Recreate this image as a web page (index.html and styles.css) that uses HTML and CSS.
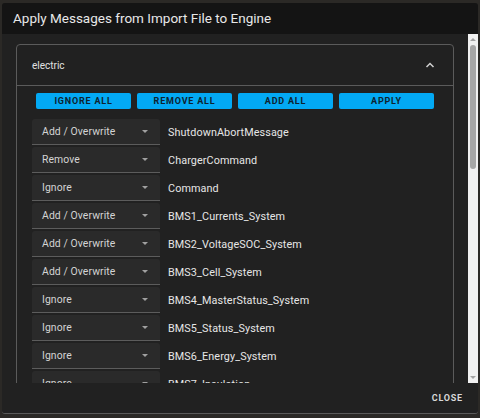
FILE: index.html
```html
<!DOCTYPE html>
<html lang="en">
<head>
    <meta charset="UTF-8">
    <title>Apply Messages</title>
    <link rel="stylesheet" href="styles.css">
</head>
<body>

    <div class="dialog">
        <div class="dialog-title">Apply Messages from Import File to Engine</div>

        <div class="dialog-body">
            <div class="scroll-area">
                <div class="card">
                    <div class="card-header">
                        <span>electric</span>
                        <svg class="chevron" width="10" height="6" viewBox="0 0 10 6">
                            <path d="M1.5 5 L5 1.5 L8.5 5" fill="none" stroke="#d0d0d0" stroke-width="1.5"/>
                        </svg>
                    </div>

                    <div class="card-content">
                        <div class="actions">
                            <button class="action-btn">Ignore All</button>
                            <button class="action-btn">Remove All</button>
                            <button class="action-btn">Add All</button>
                            <button class="action-btn">Apply</button>
                        </div>

                        <div class="rows">
                            <div class="row"><div class="select">Add / Overwrite<span class="arrow"></span></div><span class="msg">ShutdownAbortMessage</span></div>
                            <div class="row"><div class="select">Remove<span class="arrow"></span></div><span class="msg">ChargerCommand</span></div>
                            <div class="row"><div class="select">Ignore<span class="arrow"></span></div><span class="msg">Command</span></div>
                            <div class="row"><div class="select">Add / Overwrite<span class="arrow"></span></div><span class="msg">BMS1_Currents_System</span></div>
                            <div class="row"><div class="select">Add / Overwrite<span class="arrow"></span></div><span class="msg">BMS2_VoltageSOC_System</span></div>
                            <div class="row"><div class="select">Add / Overwrite<span class="arrow"></span></div><span class="msg">BMS3_Cell_System</span></div>
                            <div class="row"><div class="select">Ignore<span class="arrow"></span></div><span class="msg">BMS4_MasterStatus_System</span></div>
                            <div class="row"><div class="select">Ignore<span class="arrow"></span></div><span class="msg">BMS5_Status_System</span></div>
                            <div class="row"><div class="select">Ignore<span class="arrow"></span></div><span class="msg">BMS6_Energy_System</span></div>
                            <div class="row"><div class="select">Ignore<span class="arrow"></span></div><span class="msg">BMS7_Insulation</span></div>
                        </div>
                    </div>
                </div>
            </div>

            <!-- scrollbar -->
            <div class="scrollbar">
                <span class="sb-up"></span>
                <div class="sb-track"><div class="sb-thumb"></div></div>
                <span class="sb-down"></span>
            </div>
        </div>

        <div class="dialog-footer">
            <button class="close-btn">Close</button>
        </div>
    </div>

</body>
</html>
```

FILE: styles.css
```css
body {
    font-family: Roboto, 'Liberation Sans', sans-serif;
    background-color: #2b2926;
    margin: 0;
    padding: 0;
}

.dialog {
    margin: 3px 2px 0 2px;
    height: 410px;
    display: flex;
    flex-direction: column;
    background-color: #212121;
    border-radius: 3px;
    overflow: hidden;
    border-bottom: 1px solid #5a5a5a;
}

.dialog-title {
    height: 31px;
    line-height: 31px;
    padding: 0 11px;
    background-color: #141414;
    color: #e8e8e8;
    font-size: 13.5px;
}

.dialog-body {
    flex: 1;
    display: flex;
    min-height: 0;
}

.scroll-area {
    flex: 1;
    overflow: hidden;
    padding: 10px 14px 0 14px;
}

.card {
    border: 1px solid #5b5b5b;
    border-radius: 4px;
}

.card-header {
    height: 40px;
    display: flex;
    align-items: center;
    justify-content: space-between;
    padding: 0 18px 0 15px;
    color: #e0e0e0;
    font-size: 10px;
}

.card-content {
    border-top: 1px solid #5b5b5b;
}

.actions {
    display: grid;
    grid-template-columns: repeat(4, 95px);
    gap: 6px;
    padding: 7px 19px 0 19px;
}

.action-btn {
    height: 16px;
    padding: 0;
    border: none;
    border-radius: 2px;
    background-color: #03a9f4;
    color: #0d2330;
    font-family: Roboto, sans-serif;
    font-size: 9px;
    font-weight: 700;
    letter-spacing: 0.8px;
    text-transform: uppercase;
}

.rows {
    padding: 10px 15px 0 15px;
}

.row {
    display: flex;
    align-items: center;
    height: 26px;
    margin-bottom: 2px;
}

.select {
    width: 118px;
    height: 25px;
    padding-left: 10px;
    display: flex;
    align-items: center;
    justify-content: space-between;
    background-color: #2a2a2a;
    border-bottom: 1px solid #5c5c5c;
    border-radius: 3px 3px 0 0;
    color: #d4d4d4;
    font-size: 10.4px;
    letter-spacing: 0.1px;
}

.arrow {
    width: 0;
    height: 0;
    margin-right: 12px;
    border-left: 3.5px solid transparent;
    border-right: 3.5px solid transparent;
    border-top: 3.5px solid #a0a0a0;
}

.msg {
    margin-left: 8px;
    color: #e6e6e6;
    font-size: 10.8px;
    letter-spacing: 0.1px;
}

.scrollbar {
    width: 10px;
    background-color: #f1f1f1;
    display: flex;
    flex-direction: column;
    align-items: center;
}

.sb-up,
.sb-down {
    width: 0;
    height: 0;
    border-left: 3px solid transparent;
    border-right: 3px solid transparent;
}

.sb-up {
    margin-top: 4px;
    border-bottom: 3px solid #a3a3a3;
}

.sb-down {
    margin-bottom: 4px;
    border-top: 3px solid #a3a3a3;
}

.sb-track {
    flex: 1;
    width: 100%;
    padding: 4px 2px;
    box-sizing: border-box;
}

.sb-thumb {
    height: 124px;
    background-color: #a6a6a6;
    border-radius: 3px;
}

.dialog-footer {
    height: 30px;
    display: flex;
    align-items: center;
    justify-content: flex-end;
    padding-right: 15px;
}

.close-btn {
    background: none;
    border: none;
    padding: 0;
    color: #d8d8d8;
    font-family: Roboto, sans-serif;
    font-size: 9px;
    font-weight: 700;
    letter-spacing: 0.8px;
    text-transform: uppercase;
}
```
